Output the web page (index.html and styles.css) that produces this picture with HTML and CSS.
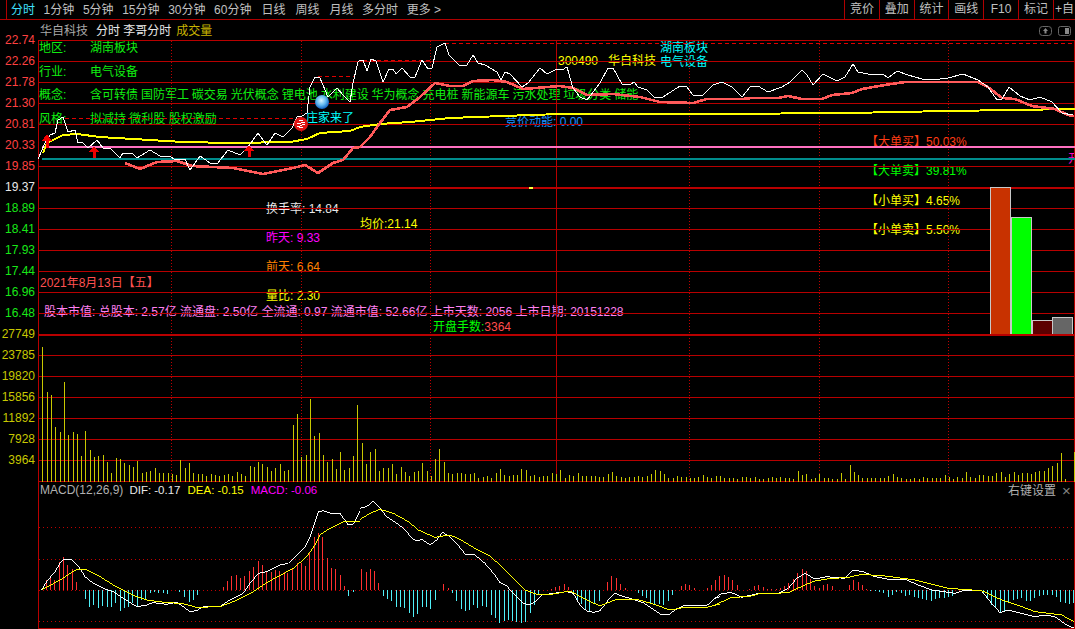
FILE: index.html
```html
<!DOCTYPE html>
<html>
  <head>
    <title>华自科技 分时</title>
    <meta name="viewport" content="width=device-width, initial-scale=1.0">
    <link rel="stylesheet" href="styles.css">
  </head>
  <body>
    <header class="toolbar">
      <nav class="tabs">
        <span class="tab active">分时</span>
        <span class="tab">1分钟</span>
        <span class="tab">5分钟</span>
        <span class="tab">15分钟</span>
        <span class="tab">30分钟</span>
        <span class="tab">60分钟</span>
        <span class="tab wide">日线</span>
        <span class="tab wide">周线</span>
        <span class="tab wide">月线</span>
        <span class="tab">多分时</span>
        <span class="tab">更多 &gt;</span>
      </nav>
      <div class="tools">
        <span class="tool">竞价</span>
        <span class="tool">叠加</span>
        <span class="tool">统计</span>
        <span class="tool">画线</span>
        <span class="tool">F10</span>
        <span class="tool">标记</span>
        <span class="tool last">+自</span>
      </div>
    </header>

    <div class="workspace">
      <aside class="axis">
        <span class="up">22.74</span>
        <span class="up">22.26</span>
        <span class="up">21.78</span>
        <span class="up">21.30</span>
        <span class="up">20.81</span>
        <span class="up">20.33</span>
        <span class="up">19.85</span>
        <span class="flat">19.37</span>
        <span class="down">18.89</span>
        <span class="down">18.41</span>
        <span class="down">17.93</span>
        <span class="down">17.44</span>
        <span class="down">16.96</span>
        <span class="down">16.48</span>
        <span class="vol">27749</span>
        <span class="vol">23785</span>
        <span class="vol">19820</span>
        <span class="vol">15856</span>
        <span class="vol">11892</span>
        <span class="vol">7928</span>
        <span class="vol">3964</span>
      </aside>

      <section class="board">
        <div class="titlebar">
          <span class="stock-name">华自科技</span>
          <span class="title-main">分时 李哥分时</span>
          <span class="title-vol">成交量</span>
          <div class="title-icons">
            <svg class="icon" viewBox="0 0 13 10">
              <rect x="0.5" y="0.5" width="12" height="9" rx="3" class="icon-box"/>
              <path d="M6.5 2L9 5H7.5V7.5H5.5V5H4Z" class="icon-fill"/>
            </svg>
            <svg class="icon" viewBox="0 0 13 10">
              <rect x="0.5" y="0.5" width="12" height="9" rx="2" class="icon-box"/>
              <rect x="7" y="2" width="4" height="6" class="icon-fill"/>
            </svg>
          </div>
        </div>

        <div class="chart">
          <div class="sector">
            <span>地区:</span><span>湖南板块</span>
            <span>行业:</span><span>电气设备</span>
            <span>概念:</span><span class="concepts">含可转债 国防军工 碳交易 光伏概念 锂电池 水利建设 华为概念 充电桩 新能源车 污水处理 垃圾分类 储能</span>
            <span>风格:</span><span>拟减持 微利股 股权激励</span>
          </div>

          <span class="code">300490</span>
          <span class="code-name">华自科技</span>
          <span class="tag-area">湖南板块</span>
          <span class="tag-industry">电气设备</span>
          <span class="dealer">庄家来了</span>
          <span class="auction">竞价动能: 0.00</span>
          <span class="open-mark">开</span>

          <div class="orders">
            <span class="big-buy">【大单买】50.03%</span>
            <span class="big-sell">【大单卖】39.81%</span>
            <span class="small-order">【小单买】4.65%</span>
            <span class="small-order">【小单卖】5.50%</span>
          </div>

          <div class="turnover">
            <span class="t-white">换手率: 14.84</span>
            <span class="t-magenta">昨天: 9.33</span>
            <span class="t-orange">前天: 6.64</span>
            <span class="t-yellow">量比: 2.30</span>
          </div>
          <span class="avg-price">均价:21.14</span>
          <span class="trade-date">2021年8月13日【五】</span>
          <span class="capital">股本市值: 总股本: 2.57亿 流通盘: 2.50亿 全流通: 0.97 流通市值: 52.66亿 上市天数: 2056 上市日期: 20151228</span>
          <span class="open-lots">开盘手数:<em>3364</em></span>

          <div class="macd-legend">
            <span class="t-gray">MACD(12,26,9)</span>
            <span class="t-white">DIF: -0.17</span>
            <span class="t-yellow">DEA: -0.15</span>
            <span class="t-magenta">MACD: -0.06</span>
          </div>
          <span class="right-click">右键设置</span>
          <span class="close-x">×</span>

          <svg class="plot" viewBox="38 40 1037 589">
            <defs>
              <radialGradient id="ball" cx="45%" cy="40%" r="60%">
                <stop offset="0" stop-color="#d8f4ff"/>
                <stop offset="0.55" stop-color="#60b8f0"/>
                <stop offset="1" stop-color="#1060c0"/>
              </radialGradient>
            </defs>

            <!-- grid -->
            <path class="grid" d="M38 40.5H1075M38 61.5H1075M38 82.5H1075M38 103.5H1075M38 124.5H1075M38 166.5H1075M38 208.5H1075M38 229.5H1075M38 250.5H1075M38 271.5H1075M38 292.5H1075M38 313.5H1075M38 355.5H1075M38 376.5H1075M38 397.5H1075M38 418.5H1075M38 439.5H1075M38 460.5H1075M38 481.5H1075M38 628.5H1075M38.5 40V629M1074.5 40V629M556.5 40V481"/>
            <path class="grid-thick" d="M38 188H1075M38 335H1075"/>
            <path class="grid-dots" d="M171.5 41V481M301.5 41V481M430.5 41V481M689.5 41V481M819.5 41V481M948.5 41V481"/>
            <path class="grid-dots-h" d="M39 527.5H1074M39 559.5H1074M39 590.5H1074M39 621.5H1074"/>
            <path class="level-pink" d="M42 147H1075"/>
            <path class="level-teal" d="M42 159H1075"/>
            <path class="level-dash" d="M65 118.5H295M318 76.5H355M363 60.5H430M445 43.5H1074"/>

            <!-- order bars -->
            <rect class="bar bar-buy" x="990.5" y="187.5" width="20" height="147"/>
            <rect class="bar bar-sell" x="1011" y="217.5" width="20.5" height="117"/>
            <rect class="bar bar-small-buy" x="1032" y="320.5" width="20" height="14"/>
            <rect class="bar bar-small-sell" x="1052.5" y="317.5" width="20" height="17"/>
            <path class="grid-thick" d="M990 335H1075"/>

            <!-- volume -->
            <g class="vol-bars" transform="translate(0 340) scale(0.33333)">
              <path d="M127 20V426M142 155V426M154 165V426M166 260V426M181 275V426M193 125V426M205 285V426M220 275V426M232 282V426M244 348V426M256 272V426M271 330V426M283 350V426M295 348V426M310 345V426M322 365V426M334 398V426M349 353V426M361 357V426M373 368V426M388 375V426M400 380V426M412 362V426M427 398V426M439 395V426M451 393V426M466 384V426M478 398V426M490 398V426M505 400V426M517 402V426M529 405V426M541 360V426M556 384V426M568 368V426M580 398V426M595 402V426M607 402V426M619 407V426M634 402V426M646 405V426M658 408V426M673 405V426M685 402V426M697 408V426M712 395V426M724 402V426M736 407V426M751 378V426M763 380V426M775 365V426M787 372V426M802 380V426M814 393V426M826 384V426M841 372V426M853 393V426M865 390V426M880 255V426M892 222V426M904 350V426M919 345V426M931 177V426M943 288V426M958 278V426M970 345V426M982 365V426M997 357V426M1009 386V426M1021 336V426M1033 390V426M1048 384V426M1060 347V426M1072 195V426"/>
            </g>
            <g class="vol-bars" transform="translate(360 340) scale(0.33333)">
              <path d="M7 308V426M19 372V426M31 336V426M46 327V426M58 393V426M70 384V426M85 384V426M97 372V426M109 402V426M124 381V426M136 396V426M148 408V426M163 396V426M175 393V426M187 369V426M202 393V426M214 408V426M226 357V426M238 327V426M253 366V426M265 399V426M277 402V426M292 399V426M304 399V426M316 402V426M331 402V426M343 399V426M355 414V426M370 411V426M382 408V426M394 414V426M409 399V426M421 387V426M433 405V426M448 408V426M460 405V426M472 405V426M484 387V426M499 390V426M511 408V426M523 405V426M538 411V426M550 408V426M562 408V426M577 399V426M589 402V426M601 390V426M616 414V426M628 405V426M640 408V426M655 399V426M667 408V426M679 408V426M694 408V426M706 408V426M718 411V426M730 411V426M745 402V426M757 396V426M769 408V426M784 411V426M796 414V426M808 411V426M823 411V426M835 408V426M847 411V426M862 408V426M874 402V426M886 390V426M901 393V426M913 402V426M925 414V426M940 414V426M952 408V426M964 411V426M979 411V426M991 414V426M1003 414V426M1015 411V426M1030 405V426M1042 411V426M1054 414V426M1069 408V426"/>
            </g>
            <g class="vol-bars" transform="translate(715 340) scale(0.33333)">
              <path d="M4 408V426M16 408V426M28 414V426M43 414V426M55 414V426M67 417V426M82 411V426M94 411V426M106 414V426M121 411V426M133 417V426M145 417V426M160 414V426M172 411V426M184 414V426M196 411V426M211 414V426M223 414V426M235 417V426M250 393V426M262 405V426M274 402V426M289 417V426M301 414V426M313 402V426M328 414V426M340 414V426M352 417V426M367 417V426M379 399V426M391 417V426M406 375V426M418 396V426M430 405V426M442 414V426M457 414V426M469 414V426M481 414V426M496 414V426M508 414V426M520 408V426M535 402V426M547 411V426M559 414V426M574 417V426M586 417V426M598 414V426M613 417V426M625 411V426M637 414V426M652 414V426M664 414V426M676 414V426M691 405V426M703 411V426M715 417V426M727 411V426M742 414V426M754 396V426M766 411V426M781 414V426M793 405V426M805 405V426M820 408V426M832 408V426M844 399V426M859 396V426M871 411V426M883 402V426M898 396V426M910 405V426M922 399V426M937 399V426M949 402V426M961 396V426M973 393V426M988 393V426M1000 384V426M1012 378V426M1027 369V426M1039 339V426M1051 417V426M1078 336V426"/>
            </g>

            <!-- price, average and strength lines -->
            <polyline class="line-avg" points="43,153 47,143 63,135 77,134 100,137 150,140 183,142 233,143 290,142 307,139 320,133 350,131 360,127 380,124 410,122 450,118 503,116 560,114 715,114 848,113 948,111 1075,109"/>
            <polyline class="line-strength" points="125,163 140,169 157,162 177,161 192,166 233,168 263,174 293,168 305,165 318,173 333,163 343,160 353,148 360,147 370,137 380,123 390,110 407,107 420,97 435,83 450,86 463,86 473,81 493,80 507,82 523,89 560,86 573,88 587,95 613,94 640,97 660,102 693,103 707,99 742,99 752,98 778,98 788,96 802,99 822,99 832,95 852,93 862,89 885,85 905,82 978,82 988,87 1002,98 1015,99 1032,106 1055,109 1068,115 1074,116"/>
            <polyline class="line-price" points="38,159 45,143 50,135 55,133 58,120 63,117 68,132 75,130 78,143 82,142 88,148 97,140 103,148 110,148 120,158 123,153 132,153 137,158 150,150 160,156 170,156 175,160 185,159 190,170 200,156 210,163 217,164 228,150 240,155 248,147 258,133 267,145 275,133 283,137 292,128 297,117 302,116 307,113 310,87 315,77 320,78 328,97 337,88 343,95 350,102 353,83 358,62 360,60 363,60 367,71 371,59 376,61 383,82 389,69 393,69 396,74 402,68 410,77 415,77 422,60 428,69 432,68 437,47 445,43 449,55 460,66 467,65 473,55 478,63 485,65 497,72 501,80 505,72 510,74 522,87 528,83 540,68 547,74 557,69 562,70 567,67 573,88 580,97 587,100 600,83 608,68 613,68 622,84 630,85 634,82 638,87 647,90 655,98 663,97 680,86 687,87 693,95 703,95 713,85 722,82 732,87 742,97 750,87 758,86 768,92 782,87 790,82 802,70 807,75 813,85 823,74 837,81 845,77 853,64 858,72 873,75 883,74 888,78 897,71 908,75 922,79 932,80 948,78 963,74 978,80 988,87 997,100 1002,99 1009,87 1020,96 1030,100 1040,97 1052,102 1062,113 1073,115"/>
            <rect class="tick" x="529" y="187" width="4" height="2"/>

            <!-- markers -->
            <path class="arrow" d="M47 134L52 141H48.5V148H45.5V141H42Z"/>
            <path class="arrow" d="M94 146L99 152H95.5V158H92.5V152H89Z"/>
            <path class="arrow" d="M249 145L254 151H250.5V157H247.5V151H244Z"/>
            <circle class="ball" cx="322" cy="102" r="7"/>
            <circle class="seal" cx="301" cy="124" r="7"/>
            <path class="seal-mark" d="M299 121L303 120M297 124L305 122M297 127L305 124M299 128L303 127"/>

            <!-- macd -->
            <g class="macd-up" transform="translate(0 480) scale(0.33333)">
              <path d="M139 300V331M152 288V331M165 300V331M178 245V331M191 232V331M204 255V331M217 268V331M229 305V331M670 320V331M683 303V331M696 288V331M709 286V331M722 293V331M735 289V331M749 272V331M761 261V331M775 243V331M787 254V331M800 273V331M814 275V331M827 271V331M840 272V331M853 277V331M864 280V331M877 263V331M892 250V331M905 250V331M917 258V331M928 220V331M943 170V331M955 158V331M968 170V331M982 233V331M995 265V331M1007 268V331M1021 285V331M1033 318V331"/>
            </g>
            <g class="macd-down" transform="translate(0 480) scale(0.33333)">
              <path d="M256 331V358M269 331V382M282 331V375M295 331V383M308 331V378M322 331V382M335 331V380M348 331V370M361 331V392M374 331V385M387 331V380M399 331V368M412 331V378M425 331V360M438 331V358M451 331V340M464 331V335M477 331V340M490 331V340M503 331V342M540 331V335M553 331V352M568 331V366M581 331V360M593 331V345M1045 331V347M1060 331V335"/>
            </g>
            <polyline class="line-dif" transform="translate(0 480) scale(0.33333)" points="125,330 140,305 165,275 180,250 190,238 215,238 235,258 255,290 280,310 310,325 340,335 370,355 410,380 440,375 460,368 500,373 530,367 550,380 570,395 590,392 610,380 660,380 690,360 730,340 750,310 775,280 800,275 840,255 865,250 890,225 915,200 930,170 955,95 970,92 1000,102 1020,100 1045,135 1060,133 1080,92"/>
            <polyline class="line-dea" transform="translate(0 480) scale(0.33333)" points="125,330 180,300 230,268 260,270 300,290 340,315 370,330 410,350 440,360 500,368 545,370 590,382 660,380 700,365 760,335 800,308 880,265 920,230 945,195 960,165 990,145 1030,125 1080,123"/>

            <g class="macd-up" transform="translate(360 480) scale(0.33333)">
              <path d="M5 267V331M20 275V331M31 267V331M44 273V331M57 308V331M250 312V331M265 323V331M575 327V331M588 322V331M600 318V331M613 312V331M626 320V331M742 305V331M756 288V331M770 294V331M782 312V331M796 323V331M964 318V331M976 312V331M988 314V331M1003 325V331M1042 325V331M1055 315V331M1066 300V331"/>
            </g>
            <g class="macd-down" transform="translate(360 480) scale(0.33333)">
              <path d="M70 331V347M83 331V357M95 331V362M109 331V380M122 331V380M133 331V383M148 331V400M160 331V410M174 331V402M187 331V382M199 331V380M212 331V386M226 331V360M278 331V338M291 331V362M304 331V388M316 331V393M329 331V390M341 331V375M354 331V385M367 331V378M380 331V380M394 331V405M406 331V415M418 331V430M433 331V423M445 331V420M458 331V422M471 331V425M484 331V428M497 331V425M511 331V400M523 331V375M536 331V345M640 331V340M652 331V362M665 331V372M678 331V388M690 331V392M704 331V372M718 331V362M835 331V338M847 331V348M860 331V355M872 331V368M885 331V375M898 331V372M912 331V375M925 331V362M937 331V345"/>
            </g>
            <polyline class="line-dif" transform="translate(360 480) scale(0.33333)" points="0,85 20,80 40,63 60,85 80,110 110,130 130,145 160,178 170,183 185,178 210,195 230,180 248,157 270,170 290,190 315,222 345,225 375,250 405,285 420,308 440,318 465,345 490,370 510,375 525,365 545,345 580,340 620,335 640,340 660,375 680,393 700,397 720,392 745,360 765,340 790,350 810,355 850,368 880,388 905,405 925,405 945,390 970,377 1000,377 1040,377 1065,355 1080,350"/>
            <polyline class="line-dea" transform="translate(360 480) scale(0.33333)" points="0,118 30,100 60,88 100,100 145,125 175,150 225,172 270,165 300,178 345,205 385,225 420,255 460,295 495,330 530,343 580,342 630,333 680,360 720,378 770,358 830,358 880,372 930,390 970,383 1040,382 1080,372"/>

            <g class="macd-up" transform="translate(715 480) scale(0.33333)">
              <path d="M2 300V331M15 288V331M28 285V331M40 290V331M53 300V331M67 315V331M105 328V331M118 318V331M130 315V331M145 322V331M158 328V331M170 326V331M185 328V331M197 323V331M209 318V331M222 310V331M235 297V331M248 280V331M262 267V331M274 273V331M286 297V331M300 318V331M313 323V331M325 315V331M337 312V331M352 318V331M403 315V331M416 300V331M430 306V331M443 315V331M455 326V331"/>
            </g>
            <g class="macd-down" transform="translate(715 480) scale(0.33333)">
              <path d="M468 331V333M481 331V333M493 331V335M507 331V340M520 331V350M533 331V345M546 331V335M559 331V340M572 331V347M585 331V345M598 331V350M610 331V353M623 331V358M636 331V360M650 331V362M662 331V358M675 331V355M688 331V355M701 331V352M714 331V347M805 331V338M818 331V355M830 331V375M843 331V385M856 331V400M869 331V395M882 331V370M895 331V360M908 331V358M921 331V355M934 331V362M947 331V362M960 331V355M973 331V348M986 331V345M999 331V345M1012 331V345M1025 331V350M1038 331V365M1051 331V368M1064 331V372M1077 331V368"/>
            </g>
            <polyline class="line-dif" transform="translate(715 480) scale(0.33333)" points="0,355 20,340 50,338 80,352 110,345 130,340 190,340 220,325 245,295 270,280 300,297 335,290 390,295 415,270 445,275 480,290 520,298 570,298 610,315 650,330 720,340 750,330 800,333 830,370 855,398 880,390 920,400 960,410 990,405 1020,410 1050,432 1078,445"/>
            <polyline class="line-dea" transform="translate(715 480) scale(0.33333)" points="0,375 50,352 100,350 130,342 220,338 270,315 300,303 350,295 395,293 440,283 510,288 600,300 700,325 800,332 860,360 920,380 960,395 1040,405 1078,425"/>
          </svg>
        </div>
      </section>
    </div>
  </body>
</html>
```

FILE: styles.css
```css
* {
  margin: 0;
  padding: 0;
  box-sizing: border-box;
}
html,
body {
  width: 100%;
  height: 100%;
  overflow: hidden;
}
body {
  display: flex;
  flex-direction: column;
  background-color: #000000;
  color: #c0c0c0;
  font-family: "Liberation Sans", "Noto Sans CJK SC", sans-serif;
  font-size: 12px;
  line-height: 14px;
}
em {
  font-style: normal;
  color: #ff4c4c;
}

/* top bar */
.toolbar {
  display: flex;
  flex: 0 0 20px;
  justify-content: space-between;
  border-bottom: 1px solid #b00000;
}
.tabs {
  display: flex;
  align-items: center;
  gap: 8.6px;
  margin-left: 6px;
  padding-left: 4px;
  border-left: 1px solid #b00000;
}
.tab {
  white-space: nowrap;
}
.tab.wide {
  margin-left: 1.4px;
}
.tab.active {
  color: #40e0ff;
}
.tools {
  display: flex;
  width: 231px;
}
.tool {
  flex: 0 0 34.8px;
  border-left: 1px solid #b00000;
  text-align: center;
  line-height: 19px;
  white-space: nowrap;
}
.tool.last {
  flex: 1;
  overflow: hidden;
}

/* price and volume scale */
.workspace {
  display: flex;
  flex: 1;
  min-height: 0;
}
.axis {
  display: flex;
  flex: 0 0 38px;
  flex-direction: column;
  align-items: flex-end;
  padding-top: 10px;
  padding-right: 3px;
}
.axis span {
  height: 21px;
  line-height: 21px;
}
.up {
  color: #ff4040;
}
.flat {
  color: #e8e8e8;
}
.down {
  color: #18e818;
}
.vol {
  color: #c8c800;
}

.board {
  display: flex;
  flex: 1;
  flex-direction: column;
  min-width: 0;
}
.titlebar {
  display: flex;
  flex: 0 0 20px;
  align-items: center;
  padding-left: 2px;
  padding-top: 1px;
}
.stock-name {
  color: #a8a8a8;
  margin-right: 8px;
}
.title-main {
  color: #e8e8e8;
  margin-right: 5px;
}
.title-vol {
  color: #c8b400;
}
.title-icons {
  display: flex;
  gap: 6px;
  margin-left: auto;
  margin-right: 4px;
}
.icon {
  width: 13px;
  height: 10px;
}
.icon-box {
  fill: none;
  stroke: #666666;
}
.icon-fill {
  fill: #888888;
}

/* chart canvas */
.chart {
  position: relative;
  flex: 1;
  overflow: hidden;
}
.plot {
  position: absolute;
  inset: 0;
  width: 100%;
  height: 100%;
}
.chart > span,
.chart > div {
  position: absolute;
  white-space: nowrap;
}

.sector {
  display: grid;
  grid-template-columns: 51px auto;
  row-gap: 9.5px;
  left: 1px;
  top: 1px;
  color: #10ee10;
}
.concepts {
  word-spacing: -0.4px;
}
.code {
  left: 520px;
  top: 14px;
  color: #ffff00;
}
.code-name {
  left: 570px;
  top: 14px;
  color: #ffff00;
}
.tag-area {
  left: 622px;
  top: 1px;
  color: #00ffff;
}
.tag-industry {
  left: 622px;
  top: 15px;
  color: #00ffff;
}
.dealer {
  left: 268px;
  top: 71px;
  color: #00ffff;
}
.auction {
  left: 467px;
  top: 75px;
  color: #1e90ff;
}
.open-mark {
  left: 1030px;
  top: 112px;
  color: #ff00c0;
}

.orders {
  display: flex;
  flex-direction: column;
  gap: 15.3px;
  left: 828px;
  top: 95px;
}
.big-buy {
  color: #ff3c14;
}
.big-sell {
  color: #00ff00;
}
.small-order {
  color: #ffff00;
}

.turnover {
  display: flex;
  flex-direction: column;
  gap: 15px;
  left: 228px;
  top: 162px;
}
.t-white {
  color: #e8e8e8;
}
.t-magenta {
  color: #ff00ff;
}
.t-orange {
  color: #ff8000;
}
.t-yellow {
  color: #ffff00;
}
.t-gray {
  color: #b0b0b0;
}
.avg-price {
  left: 322px;
  top: 177px;
  color: #ffff00;
}
.trade-date {
  left: 2px;
  top: 236px;
  color: #ff5050;
}
.capital {
  left: 6px;
  top: 265px;
  color: #ff80f0;
}
.open-lots {
  left: 395px;
  top: 280px;
  color: #00ff00;
}
.macd-legend {
  display: flex;
  align-items: center;
  gap: 7px;
  left: 2px;
  top: 443px;
  font-size: 11.5px;
}
.macd-legend .t-gray {
  font-size: 12px;
  margin-right: -1px;
}
.right-click {
  left: 970px;
  top: 444px;
  color: #b0b0b0;
}
.close-x {
  left: 1024px;
  top: 444px;
  color: #808080;
  font-size: 15px;
}

/* svg parts */
.plot path,
.plot polyline,
.plot rect {
  fill: none;
  shape-rendering: crispEdges;
}
.grid {
  stroke: #b80000;
  stroke-width: 1;
}
.grid-thick {
  stroke: #b80000;
  stroke-width: 2;
}
.grid-dots {
  stroke: #c00000;
  stroke-width: 1;
  stroke-dasharray: 1 2;
}
.grid-dots-h {
  stroke: #c00000;
  stroke-width: 1;
  stroke-dasharray: 1 3;
}
.level-pink {
  stroke: #ff70c0;
  stroke-width: 2;
}
.level-teal {
  stroke: #008c8c;
  stroke-width: 2;
}
.level-dash {
  stroke: #e00000;
  stroke-width: 1;
  stroke-dasharray: 4 3;
}
.plot .bar {
  stroke: #c8c8c8;
  stroke-width: 1;
}
.plot .bar-buy {
  fill: #c83200;
}
.plot .bar-sell {
  fill: #00ff00;
}
.plot .bar-small-buy {
  fill: #5c0000;
}
.plot .bar-small-sell {
  fill: #666666;
}
.vol-bars path {
  stroke: #c8c800;
  stroke-width: 3;
}
.line-avg {
  stroke: #ffff00;
  stroke-width: 2;
}
.line-strength {
  stroke: #ff5a5a;
  stroke-width: 2.6;
}
.line-price {
  stroke: #ffffff;
  stroke-width: 1;
}
.plot .tick {
  fill: #ffff40;
}
.plot .arrow {
  fill: #f00000;
}
.ball {
  fill: url(#ball);
}
.seal {
  fill: #e01414;
}
.plot .seal-mark {
  stroke: #ffffff;
  stroke-width: 1;
}
.macd-up path {
  stroke: #ff3030;
  stroke-width: 3;
}
.macd-down path {
  stroke: #50f0f8;
  stroke-width: 3;
}
.plot .line-dif {
  stroke: #ffffff;
  stroke-width: 3;
}
.plot .line-dea {
  stroke: #ffff00;
  stroke-width: 3;
}
```
